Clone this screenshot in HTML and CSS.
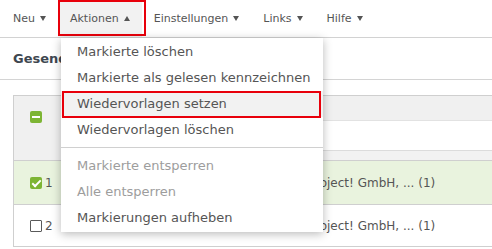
FILE: index.html
```html
<!DOCTYPE html>
<html lang="de">
<head>
<meta charset="utf-8">
<title>Postfach</title>
<link rel="stylesheet" href="styles.css">
</head>
<body>
<nav class="topnav">
  <div class="nav-item">Neu<span class="caret"></span></div>
  <div class="nav-item nav-active">Aktionen<span class="caret caret-up"></span>
    <div class="menu">
      <div class="menu-item">Markierte löschen</div>
      <div class="menu-item">Markierte als gelesen kennzeichnen</div>
      <div class="menu-item menu-hover">Wiedervorlagen setzen</div>
      <div class="menu-item">Wiedervorlagen löschen</div>
      <div class="menu-sep"></div>
      <div class="menu-item disabled">Markierte entsperren</div>
      <div class="menu-item disabled">Alle entsperren</div>
      <div class="menu-item">Markierungen aufheben</div>
    </div>
  </div>
  <div class="nav-item">Einstellungen<span class="caret"></span></div>
  <div class="nav-item">Links<span class="caret"></span></div>
  <div class="nav-item">Hilfe<span class="caret"></span></div>
</nav>

<div class="page-head">Gesendete Nachrichten</div>

<div class="table">
  <div class="thead">
    <div class="th-check"><span class="cb cb-minus"></span></div>
    <div class="th-rest">
      <div class="th-band"></div>
      <div class="th-filter"></div>
      <div class="th-foot"></div>
    </div>
  </div>
  <div class="trow selected">
    <div class="td-check"><span class="cb cb-checked"></span><span class="num">1</span></div>
    <div class="td-subject"></div>
    <div class="td-sender">Project! GmbH, ... (1)</div>
  </div>
  <div class="trow last">
    <div class="td-check"><span class="cb"></span><span class="num">2</span></div>
    <div class="td-subject"></div>
    <div class="td-sender">Project! GmbH, ... (1)</div>
  </div>
</div>
</body>
</html>
```

FILE: styles.css
```css
* { box-sizing: border-box; }
html, body { margin: 0; padding: 0; background: #fff; }
body {
  font-family: "DejaVu Sans", Verdana, sans-serif;
  color: #555;
  width: 492px;
  height: 249px;
  overflow: hidden;
}

.topnav {
  display: flex;
  height: 38px;
  padding-left: 1px;
  border-bottom: 1px solid #d2d2d2;
}
.nav-item {
  position: relative;
  padding: 0 12px;
  line-height: 37px;
  height: 37px;
  font-size: 11px;
  color: #555;
  white-space: nowrap;
}
.nav-active { background: #f2f2f2; }
.nav-active::after {
  content: "";
  position: absolute;
  left: 0;
  top: 0;
  right: -4px;
  bottom: 1px;
  border: 2px solid #e8000b;
}
.caret {
  display: inline-block;
  vertical-align: middle;
  margin-left: 5px;
  margin-top: -2px;
  width: 0;
  height: 0;
  border-left: 3px solid transparent;
  border-right: 3px solid transparent;
  border-top: 5px solid #555;
}
.caret-up {
  border-top: 0;
  border-bottom: 5px solid #555;
}

.menu {
  position: absolute;
  left: 3px;
  top: 38px;
  width: 262px;
  padding: 1px 0;
  background: #fff;
  box-shadow: 0 2px 9px rgba(0, 0, 0, 0.28);
  z-index: 10;
}
.menu-item {
  position: relative;
  height: 26px;
  line-height: 26px;
  padding: 0 16px;
  font-size: 13px;
  color: #555;
}
.menu-item.disabled { color: #9d9d9d; }
.menu-hover { background: #f2f2f2; }
.menu-hover::after {
  content: "";
  position: absolute;
  left: 1px;
  right: 2px;
  top: 0;
  bottom: -1px;
  border: 2px solid #e8000b;
}
.menu-sep {
  height: 1px;
  background: #d0d0d0;
  margin: 4px 0 5px;
}

.page-head {
  height: 42px;
  line-height: 42px;
  padding-left: 13px;
  font-size: 13px;
  font-weight: bold;
  color: #3e4750;
  border-bottom: 1px solid #d4d4d4;
}

.table {
  margin: 15px 0 0 13px;
  border-left: 1px solid #cfcfcf;
  border-top: 1px solid #cfcfcf;
}
.thead {
  display: grid;
  grid-template-columns: 47px 1fr;
  height: 64px;
}
.th-check {
  background: #f0f0f0;
  padding: 12px 0 0 16px;
}
.th-rest { display: flex; flex-direction: column; }
.th-band {
  height: 25px;
  background: #f0f0f0;
  border-bottom: 1px solid #e2e2e2;
}
.th-filter { height: 29px; background: #fff; }
.th-foot {
  flex: 1;
  background: #f2f2f2;
  border-top: 1px solid #dcdcdc;
}

.trow {
  display: grid;
  grid-template-columns: 47px 247px 1fr;
  align-items: center;
  height: 44px;
  border-top: 1px solid #cfcfcf;
  font-size: 12px;
  color: #555;
}
.trow.selected { background: #e9f3de; }
.trow.last { border-bottom: 1px solid #cfcfcf; height: 43px; }
.td-check {
  display: flex;
  align-items: center;
  padding-left: 16px;
}
.num { margin-left: 3px; font-size: 12px; }
.td-sender { white-space: nowrap; }

.cb {
  display: inline-block;
  position: relative;
  width: 12px;
  height: 12px;
  border: 1px solid #5a5a5a;
  border-radius: 1px;
  background: #fff;
}
.cb-checked, .cb-minus {
  border: 0;
  border-radius: 2px;
  background: #7db534;
}
.cb-minus::after {
  content: "";
  position: absolute;
  left: 2px;
  right: 2px;
  top: 5px;
  height: 2px;
  background: #fff;
}
.cb-checked::after {
  content: "";
  position: absolute;
  left: 4px;
  top: 1px;
  width: 3px;
  height: 7px;
  border: solid #fff;
  border-width: 0 2px 2px 0;
  transform: rotate(45deg);
}
```
